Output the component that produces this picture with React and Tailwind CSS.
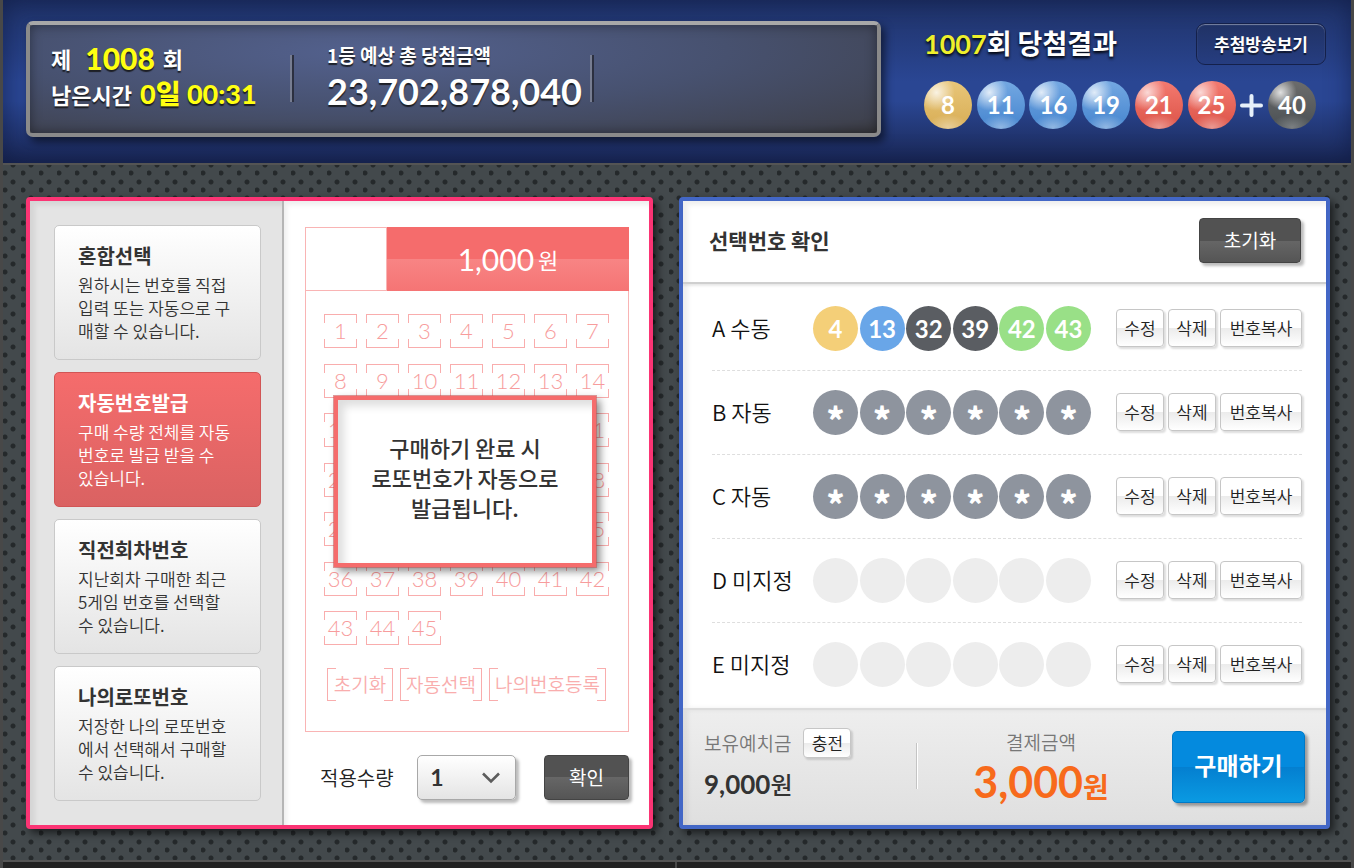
import React, { useState } from "react";
import clsx from "clsx";

const modes = [
  { title: "혼합선택", desc: "원하시는 번호를 직접\n입력 또는 자동으로 구\n매할 수 있습니다." },
  { title: "자동번호발급", desc: "구매 수량 전체를 자동\n번호로 발급 받을 수\n있습니다." },
  { title: "직전회차번호", desc: "지난회차 구매한 최근\n5게임 번호를 선택할\n수 있습니다." },
  { title: "나의로또번호", desc: "저장한 나의 로또번호\n에서 선택해서 구매할\n수 있습니다." },
];

const games = [
  { id: "A", type: "수동", numbers: [4, 13, 32, 39, 42, 43] },
  { id: "B", type: "자동" },
  { id: "C", type: "자동" },
  { id: "D", type: "미지정" },
  { id: "E", type: "미지정" },
];

const winning = [8, 11, 16, 19, 21, 25];

const flatColor = (n) => {
  if (n <= 10) return "bg-[#f4cf78]";
  if (n <= 20) return "bg-[#69a6e8]";
  if (n <= 30) return "bg-[#ee6a60]";
  if (n <= 40) return "bg-[#5a5d62]";
  return "bg-[#99e087]";
};

const glossColor = (n) => {
  if (n <= 10)
    return "bg-[radial-gradient(circle_at_26%_24%,#fffc,#fff0_36%),radial-gradient(44%_26%_at_50%_96%,#fff6,#fff0),linear-gradient(#e8c679,#d8ad55)]";
  if (n <= 20)
    return "bg-[radial-gradient(circle_at_26%_24%,#fffc,#fff0_36%),radial-gradient(44%_26%_at_50%_96%,#fff6,#fff0),linear-gradient(#74a8e2,#4585cf)]";
  if (n <= 30)
    return "bg-[radial-gradient(circle_at_26%_24%,#fffb,#fff0_36%),radial-gradient(44%_26%_at_50%_96%,#fff6,#fff0),linear-gradient(#f47a70,#dc5347)]";
  return "bg-[radial-gradient(circle_at_26%_24%,#fffc,#fff0_32%),radial-gradient(44%_26%_at_50%_96%,#fff4,#fff0),linear-gradient(#6c6c6c,#4a5054)]";
};

const GlossBall = ({ n }) => (
  <span
    className={clsx(
      "flex size-12 items-center justify-center rounded-full pb-px font-[Lato] text-2xl font-bold text-white",
      glossColor(n)
    )}
  >
    {n}
  </span>
);

const DarkButton = ({ className, children }) => (
  <button
    type="button"
    className={clsx(
      "h-[45px] rounded-[4px] border border-[#444] bg-[linear-gradient(#525252_50%,#666_50%,#555)] text-[19px] text-white shadow-[3px_3px_3px_#0004]",
      className
    )}
  >
    {children}
  </button>
);

const LightButton = ({ className, children }) => (
  <button
    type="button"
    className={clsx(
      "rounded-[4px] border border-[#c6c6c6] bg-[linear-gradient(#fff_50%,#ebebeb_50%,#fff)] text-[17px] font-[350] text-[#222] shadow-[2px_2px_2px_#0002]",
      className
    )}
  >
    {children}
  </button>
);

const Header = () => (
  <header className="flex items-start gap-[43px] border-b-2 border-[#545454] bg-[linear-gradient(#1f3268,#2a4693_50%,#2a4693_62%,#1a2755)] pt-[21px] pr-[25px] pb-[26px] pl-[23px] shadow-[inset_0_0_24px_#0b153a99]">
    <section className="min-w-0 flex-1 rounded-[7px] border-4 border-[#8a8a8a] border-t-[#a8a8a8] bg-[radial-gradient(ellipse_at_40%_25%,#53618e,#47516f_50%,#3f424f_90%,#38383d)] shadow-[4px_5px_8px_#0008]">
      <div className="flex h-[108px] items-start font-bold text-white shadow-[inset_0_0_12px_#0006] [text-shadow:0_2px_1px_#111c]">
        <div className="w-[260px] pt-[15px] pl-[21px]">
          <p className="flex h-9 items-center text-[22px]">
            제
            <strong className="mr-2 ml-[14px] font-[Lato] text-[30px] text-[#ff1]">1008</strong>
            회
          </p>
          <p className="flex h-9 items-center text-[22px] whitespace-nowrap">
            남은시간
            <strong className="ml-2 font-[Lato,'Noto_Sans_CJK_KR',sans-serif] text-[27px] text-[#ff1]">
              0일 00:31
            </strong>
          </p>
        </div>
        <div className="mt-[30px] h-[47px] w-1 border-x-2 border-l-[#777d91] border-r-[#2c3040]" />
        <div className="w-[296px] pt-[15px] pl-[33px]">
          <p className="text-[19px] leading-[30px]">1등 예상 총 당첨금액</p>
          <p className="font-[Lato] text-[36px] leading-[42px]">23,702,878,040</p>
        </div>
        <div className="mt-[30px] h-[47px] w-1 border-x-2 border-l-[#777d91] border-r-[#2c3040]" />
      </div>
    </section>
    <section className="flex w-[402px] flex-col">
      <div className="flex h-[44px] items-center justify-between pt-[2px]">
        <h2 className="text-[27px] font-bold text-white [text-shadow:0_2px_3px_#000]">
          <span className="font-[Lato] text-[#eef02c]">1007</span>회 당첨결과
        </h2>
        <button
          type="button"
          className="h-[42px] w-[130px] rounded-[9px] border border-[#14204a] bg-[linear-gradient(#203265,#263d80)] text-[17px] font-bold text-white shadow-[inset_0_1px_1px_#fff6] [text-shadow:0_2px_1px_#0009]"
        >
          추첨방송보기
        </button>
      </div>
      <div className="mt-4 flex w-[392px] items-center justify-between">
        {winning.map((n) => (
          <GlossBall key={n} n={n} />
        ))}
        <svg viewBox="0 0 23 23" className="size-[23px]" aria-hidden="true">
          <path d="M11.5 2v19M2 11.5h19" stroke="#e6f0fa" strokeWidth="4" strokeLinecap="round" />
        </svg>
        <GlossBall n={40} />
      </div>
    </section>
  </header>
);

// cell with open left/right sides: the two pseudo elements are the brackets
const NumberCell = ({ n, covered }) => (
  <button
    type="button"
    className={clsx(
      "relative h-[34px] w-[33px] pb-px font-[Lato] text-[22px] font-light text-[#f79c9c] before:absolute before:inset-x-0 before:top-0 before:h-[9px] before:border before:border-b-0 before:border-[#f9adad] after:absolute after:inset-x-0 after:bottom-0 after:h-[9px] after:border after:border-t-0 after:border-[#f9adad]",
      covered && "invisible"
    )}
  >
    {n}
  </button>
);

const BracketButton = ({ children, className }) => (
  <button
    type="button"
    className={clsx(
      "relative h-[33px] text-[19px] font-[350] whitespace-nowrap text-[#f9adad] before:absolute before:inset-y-0 before:left-0 before:w-[9px] before:border before:border-r-0 before:border-[#f9adad] after:absolute after:inset-y-0 after:right-0 after:w-[9px] after:border after:border-l-0 after:border-[#f9adad]",
      className
    )}
  >
    {children}
  </button>
);

const ModeMenu = ({ mode, setMode }) => (
  <nav className="flex w-[254px] shrink-0 flex-col gap-3 border-r-2 border-[#b5b5b5] bg-[#e4e4e4] py-6 pr-[21px] pl-6 shadow-[inset_5px_4px_5px_#0001]">
    {modes.map((m, i) => (
      <button
        type="button"
        key={m.title}
        onClick={() => setMode(i)}
        className={clsx(
          "h-[135px] rounded-[5px] border pb-[2px] pl-[23px] text-left",
          mode === i
            ? "border-[#d15555] bg-[linear-gradient(#f56c6c,#da6262)] text-white"
            : "border-[#c9c9c9] bg-[linear-gradient(#fff,#e4e4e4)] text-[#333]"
        )}
      >
        <strong className="mb-[2px] block text-xl leading-[30px] font-bold">{m.title}</strong>
        <span className="block text-[17px] leading-[23px] font-[350] whitespace-pre">{m.desc}</span>
      </button>
    ))}
  </nav>
);

// the notice lies over columns 2-6 of rows 3-5
const isCovered = (i) => {
  const row = Math.floor(i / 7);
  const col = i % 7;
  return row >= 2 && row <= 4 && col >= 1 && col <= 5;
};

const Ticket = () => (
  <div className="relative border border-[#f9b4b4]">
    <div className="-mx-px -mt-px flex h-[64px]">
      <div className="w-[82px] border border-[#f9b4b4]" />
      <div className="flex flex-1 items-center justify-center gap-1 bg-[linear-gradient(#f56c6c_50%,#f88484_50%,#f57474)] text-white">
        <span className="font-[Lato] text-[30px]">1,000</span>
        <span className="text-[22px]">원</span>
      </div>
    </div>
    <div className="mt-[23px] mr-[19px] ml-[18px] flex flex-col">
      <div className="grid h-[331px] grid-cols-7 content-between gap-x-[9px]">
        {Array.from({ length: 45 }, (_, i) => (
          <NumberCell key={i} n={i + 1} covered={isCovered(i)} />
        ))}
      </div>
      <div className="mt-[23px] mb-[30px] flex justify-center gap-[7px]">
        <BracketButton className="w-[66px]">초기화</BracketButton>
        <BracketButton className="w-[82px]">자동선택</BracketButton>
        <BracketButton className="w-[117px]">나의번호등록</BracketButton>
      </div>
    </div>
    <div className="absolute top-[168px] left-7 flex h-[171px] w-[262px] items-center justify-center border-4 border-[#f56c6c] bg-white pb-[10px] text-center text-[22px] leading-[30px] font-medium text-[#333] shadow-[inset_6px_6px_8px_#0002,0_0_0_1px_#c9595999,4px_4px_8px_#0007]">
      <p>
        구매하기 완료 시
        <br />
        로또번호가 자동으로
        <br />
        발급됩니다.
      </p>
    </div>
  </div>
);

const SelectPanel = () => {
  const [mode, setMode] = useState(1);
  const [count, setCount] = useState("1");
  return (
    <section className="flex rounded-[4px] border-4 border-[#fb3474] bg-white shadow-[4px_4px_8px_#0009]">
      <ModeMenu mode={mode} setMode={setMode} />
      <div className="min-w-0 flex-1 pt-[26px] pr-5 pb-[25px] pl-[21px] shadow-[inset_3px_4px_5px_#0001]">
        <Ticket />
        <div className="mt-[23px] flex items-center justify-between pl-[15px]">
          <label htmlFor="count" className="text-xl font-[350] text-[#222]">
            적용수량
          </label>
          <div className="relative mr-1">
            <select
              id="count"
              value={count}
              onChange={(e) => setCount(e.target.value)}
              className="h-[45px] w-[99px] appearance-none rounded-[5px] border border-[#a8a8a8] bg-[linear-gradient(#fff,#e4e4e4)] pl-3 font-[Lato] text-[23px] font-bold text-[#333] shadow-[3px_3px_3px_#0004]"
            >
              {[1, 2, 3, 4, 5].map((n) => (
                <option key={n}>{n}</option>
              ))}
            </select>
            <svg
              viewBox="0 0 18 12"
              className="pointer-events-none absolute top-[17px] right-4 h-3 w-[18px]"
              fill="none"
              aria-hidden="true"
            >
              <path d="M1 1.5l8 8 8-8" stroke="#5c5c5c" strokeWidth="2.6" />
            </svg>
          </div>
          <DarkButton className="w-[85px]">확인</DarkButton>
        </div>
      </div>
    </section>
  );
};

const GameRow = ({ game, last }) => (
  <li
    className={clsx(
      "flex h-[84px] items-center border-b border-dashed",
      last ? "border-transparent" : "border-[#dedede]"
    )}
  >
    <span className="w-[101px] pb-[2px] text-[22px] font-[350] text-[#111]">
      {game.id} {game.type}
    </span>
    <span className="flex w-[278px] justify-between">
      {[0, 1, 2, 3, 4, 5].map((i) => {
        const n = game.numbers?.[i];
        const auto = game.type === "자동";
        return (
          <span
            key={i}
            className={clsx(
              "flex size-[45px] items-center justify-center rounded-full font-[Lato] text-2xl font-bold text-white",
              n ? flatColor(n) : auto ? "bg-[#8e949e]" : "bg-[#ededed]"
            )}
          >
            {n ||
              (auto && (
                <span className="pt-3 font-['Noto_Sans_CJK_KR',sans-serif] text-[34px] leading-none font-black">
                  *
                </span>
              ))}
          </span>
        );
      })}
    </span>
    <span className="ml-auto flex gap-1 pb-px">
      <LightButton className="h-[38px] w-12">수정</LightButton>
      <LightButton className="h-[38px] w-12">삭제</LightButton>
      <LightButton className="h-[38px] w-[82px]">번호복사</LightButton>
    </span>
  </li>
);

const ConfirmPanel = () => (
  <section className="flex flex-col rounded-[4px] border-4 border-[#4367c6] bg-white shadow-[4px_4px_8px_#0009]">
    <div className="flex h-[83px] items-center justify-between border-b-2 border-[#cfcfcf] pr-[25px] pb-[2px] pl-[26px] shadow-[0_2px_2px_#0001,inset_5px_4px_5px_#0001]">
      <h2 className="text-[21px] font-bold text-[#333]">선택번호 확인</h2>
      <DarkButton className="w-[102px]">초기화</DarkButton>
    </div>
    <ul className="flex-1 pt-[3px] pr-6 pl-[29px] shadow-[inset_5px_0_5px_#0001]">
      {games.map((g, i) => (
        <GameRow key={g.id} game={g} last={i === games.length - 1} />
      ))}
    </ul>
    <div className="flex h-[117px] items-start border-t-2 border-[#dcdcdc] bg-[linear-gradient(#eee,#dfdfdf)] px-[21px] shadow-[inset_5px_0_5px_#0001]">
      <div className="w-[212px] pt-[18px]">
        <p className="flex items-center gap-3 text-[19px] font-[350] text-[#777]">
          보유예치금
          <LightButton className="h-[30px] w-12">충전</LightButton>
        </p>
        <p className="mt-2 flex items-center text-[24px] leading-9 font-medium text-[#333]">
          <span className="font-[Lato] text-[26px] font-bold">9,000</span>원
        </p>
      </div>
      <div className="mt-[33px] h-[46px] w-0.5 border-r border-l border-r-white border-l-[#c4c4c4]" />
      <div className="flex-1 pt-[17px] pr-2 text-center">
        <p className="text-[19px] leading-[30px] font-[350] text-[#777]">결제금액</p>
        <p className="flex items-baseline justify-center text-[28px] leading-[50px] font-bold text-[#f76a1b]">
          <span className="font-[Lato] text-[43px]">3,000</span>원
        </p>
      </div>
      <button
        type="button"
        className="mt-[21px] h-[72px] w-[133px] rounded-[5px] border border-[#0079c7] bg-[linear-gradient(#048ade_50%,#047fd0_50%,#0a9ae2)] pb-1 text-2xl font-bold text-white shadow-[3px_3px_3px_#0005]"
      >
        구매하기
      </button>
    </div>
  </section>
);

export default function App() {
  return (
    <div className="flex min-h-screen flex-col bg-[#484848] px-[3px] font-['Noto_Sans_CJK_KR',sans-serif]">
      <Header />
      <main className="grid grid-cols-[627fr_651fr] gap-[26px] border-b-2 border-[#555] bg-[#43494c] bg-[radial-gradient(circle_at_2px_8px,#25292b_2px,#0000_3px),radial-gradient(circle_at_10px_17px,#25292b_2px,#0000_3px),radial-gradient(circle_at_2px_25px,#25292b_2px,#0000_3px),radial-gradient(circle_at_10px_33px,#25292b_2px,#0000_3px),radial-gradient(circle_at_10px_0px,#25292b_2px,#0000_3px)] bg-[size:18px_33px] pt-8 pr-[21px] pb-[31px] pl-[23px]">
        <SelectPanel />
        <ConfirmPanel />
      </main>
      <footer className="grid flex-1 grid-cols-2 divide-x-2 divide-[#4a4a4a] bg-[#222]">
        <div />
        <div />
      </footer>
    </div>
  );
}
